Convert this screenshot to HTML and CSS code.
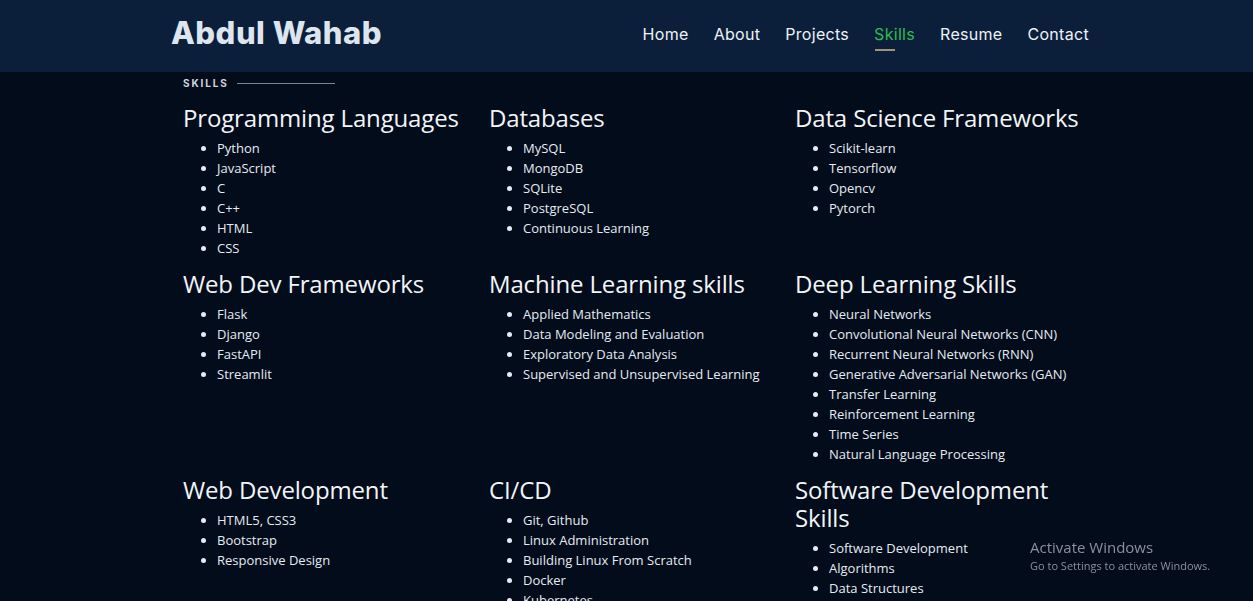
FILE: index.html
```html
<!DOCTYPE html>
<html lang="en">
<head>
<meta charset="utf-8">
<title>Abdul Wahab - Skills</title>
<link rel="stylesheet" href="styles.css">
</head>
<body>
<header class="topbar">
  <div class="topbar-inner">
    <div class="logo">Abdul Wahab</div>
    <nav class="nav">
      <a class="nav-link" href="#">Home</a>
      <a class="nav-link" href="#">About</a>
      <a class="nav-link" href="#">Projects</a>
      <a class="nav-link active" href="#">Skills</a>
      <a class="nav-link" href="#">Resume</a>
      <a class="nav-link" href="#">Contact</a>
    </nav>
  </div>
</header>
<main class="section">
  <div class="section-label"><span>SKILLS</span><i class="label-line"></i></div>
  <div class="grid">
    <div class="card">
      <h3>Programming Languages</h3>
      <ul><li>Python</li><li>JavaScript</li><li>C</li><li>C++</li><li>HTML</li><li>CSS</li></ul>
    </div>
    <div class="card">
      <h3>Databases</h3>
      <ul><li>MySQL</li><li>MongoDB</li><li>SQLite</li><li>PostgreSQL</li><li>Continuous Learning</li></ul>
    </div>
    <div class="card">
      <h3>Data Science Frameworks</h3>
      <ul><li>Scikit-learn</li><li>Tensorflow</li><li>Opencv</li><li>Pytorch</li></ul>
    </div>
    <div class="card">
      <h3>Web Dev Frameworks</h3>
      <ul><li>Flask</li><li>Django</li><li>FastAPI</li><li>Streamlit</li></ul>
    </div>
    <div class="card">
      <h3>Machine Learning skills</h3>
      <ul><li>Applied Mathematics</li><li>Data Modeling and Evaluation</li><li>Exploratory Data Analysis</li><li>Supervised and Unsupervised Learning</li></ul>
    </div>
    <div class="card">
      <h3>Deep Learning Skills</h3>
      <ul><li>Neural Networks</li><li>Convolutional Neural Networks (CNN)</li><li>Recurrent Neural Networks (RNN)</li><li>Generative Adversarial Networks (GAN)</li><li>Transfer Learning</li><li>Reinforcement Learning</li><li>Time Series</li><li>Natural Language Processing</li></ul>
    </div>
    <div class="card">
      <h3>Web Development</h3>
      <ul><li>HTML5, CSS3</li><li>Bootstrap</li><li>Responsive Design</li></ul>
    </div>
    <div class="card">
      <h3>CI/CD</h3>
      <ul><li>Git, Github</li><li>Linux Administration</li><li>Building Linux From Scratch</li><li>Docker</li><li>Kubernetes</li></ul>
    </div>
    <div class="card">
      <h3>Software Development Skills</h3>
      <ul><li>Software Development</li><li>Algorithms</li><li>Data Structures</li></ul>
    </div>
  </div>
</main>
<div class="watermark">
  <div class="wm-title">Activate Windows</div>
  <div class="wm-sub">Go to Settings to activate Windows.</div>
</div>
</body>
</html>
```

FILE: styles.css
```css
html, body {
  margin: 0;
  padding: 0;
  height: 100%;
  overflow: hidden;
}
body {
  background: #020c1b;
  color: #e8edf3;
  font-family: "Open Sans", "Liberation Sans", sans-serif;
}
.topbar {
  background: #0b1f3b;
  height: 72px;
}
.topbar-inner {
  margin-left: 171px;
  width: 918px;
  height: 72px;
  display: flex;
  align-items: center;
  justify-content: space-between;
}
.logo {
  font-family: "Inter", "Noto Sans", sans-serif;
  font-weight: 800;
  font-size: 31px;
  color: #dde6ef;
  letter-spacing: 0.5px;
  margin-top: -7px;
}
.nav {
  display: flex;
  gap: 25px;
  margin-top: -4px;
}
.nav-link {
  position: relative;
  font-family: "Inter", "Noto Sans", sans-serif;
  font-size: 16px;
  letter-spacing: 0.3px;
  color: #eef2f7;
  text-decoration: none;
}
.nav-link.active {
  color: #2fbb4f;
}
.nav-link.active::after {
  content: "";
  position: absolute;
  left: 1px;
  top: 25px;
  width: 20px;
  height: 2px;
  background: #9c957c;
}
.section {
  margin-left: 171px;
  width: 918px;
}
.section-label {
  display: flex;
  align-items: center;
  gap: 8px;
  padding: 3px 0 0 12px;
  height: 16px;
}
.section-label span {
  font-family: "Inter", "Noto Sans", sans-serif;
  font-weight: 700;
  font-size: 10px;
  letter-spacing: 1.9px;
  color: #cfd6df;
}
.label-line {
  display: block;
  width: 98px;
  height: 1px;
  background: #7b8594;
}
.grid {
  display: grid;
  grid-template-columns: repeat(3, 306px);
  margin-top: 13px;
}
.card {
  padding: 0 4px 0 12px;
}
.card h3 {
  margin: 0 0 6px;
  font-family: "Open Sans", "Liberation Sans", sans-serif;
  font-weight: 400;
  font-size: 24px;
  line-height: 28px;
  color: #f2f5f8;
  letter-spacing: -0.15px;
}
.card ul {
  margin: 0 0 12px;
  padding-left: 34px;
}
.card li {
  font-size: 13px;
  line-height: 20px;
  color: #e6ebf1;
}
.watermark {
  position: fixed;
  left: 1030px;
  top: 537px;
  color: #8b9099;
  font-family: "Open Sans", "Liberation Sans", sans-serif;
}
.wm-title {
  font-size: 15px;
  line-height: 20px;
}
.wm-sub {
  font-size: 11px;
  line-height: 16px;
  margin-top: 1px;
}
```
